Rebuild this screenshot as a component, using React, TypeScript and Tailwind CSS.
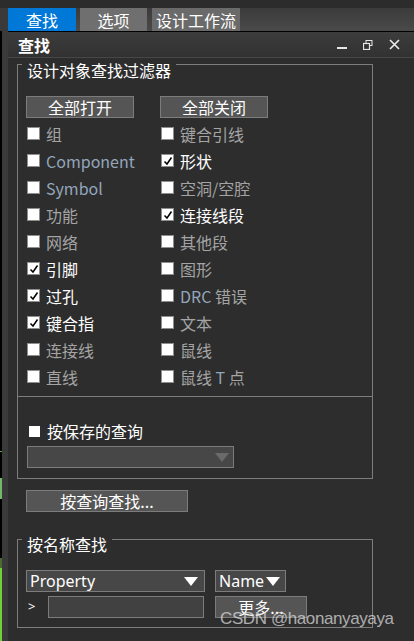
import type { ReactNode } from "react";

const cjk = "font-['Noto_Sans_CJK_SC','Noto_Sans',sans-serif]";

function Box({ checked }: { checked?: boolean }) {
  return (
    <span className="w-[13px] h-[13px] bg-white border border-[#8e8e8e] flex items-center justify-center shrink-0">
      {checked && (
        <svg width="10" height="10" viewBox="0 0 10 10">
          <path d="M1.5 5.5 L4 8 L8.5 1.5" stroke="#000" strokeWidth="1.5" fill="none" />
        </svg>
      )}
    </span>
  );
}

function En({ children }: { children: ReactNode }) {
  return <span className="text-[#93a6bb]">{children}</span>;
}

function Item({ label, checked }: { label: ReactNode; checked?: boolean }) {
  return (
    <div className="h-[27px] flex items-center gap-[6px] pl-px">
      <Box checked={checked} />
      <span className={checked ? "text-white" : "text-[#a4a4a4]"}>{label}</span>
    </div>
  );
}

function Btn({ children, className }: { children: ReactNode; className?: string }) {
  return (
    <div
      className={
        "h-[22px] bg-[#555555] border border-[#7c7c7c] text-white flex items-center justify-center leading-none " +
        (className ?? "")
      }
    >
      {children}
    </div>
  );
}

function Tri({ color }: { color: string }) {
  return (
    <svg width="14" height="9" viewBox="0 0 14 9">
      <path d="M0 0 H14 L7 9 Z" fill={color} />
    </svg>
  );
}

export default function App() {
  const left = [
    { l: "组" },
    { l: <En>Component</En> },
    { l: <En>Symbol</En> },
    { l: "功能" },
    { l: "网络" },
    { l: "引脚", c: true },
    { l: "过孔", c: true },
    { l: "键合指", c: true },
    { l: "连接线" },
    { l: "直线" },
  ];
  const right = [
    { l: "键合引线" },
    { l: "形状", c: true },
    { l: "空洞/空腔" },
    { l: "连接线段", c: true },
    { l: "其他段" },
    { l: "图形" },
    { l: <><En>DRC</En> 错误</> },
    { l: "文本" },
    { l: "鼠线" },
    { l: <>鼠线 <En>T</En> 点</> },
  ];

  return (
    <div className={"w-[414px] h-[641px] bg-[#2d2d2d] flex flex-col overflow-hidden relative text-[16px] " + cjk}>
      {/* top strip */}
      <div className="h-2 bg-[#2c2c2c] shrink-0" />
      {/* tabs */}
      <div className="h-[23px] flex shrink-0 bg-gradient-to-b from-[#3b3b3b] to-[#4a4a4a] text-white leading-none">
        <div className="w-2 bg-[#3a3a3a]" />
        <div className="w-[68px] bg-[#0078d7] flex items-center justify-center">查找</div>
        <div className="w-[67px] ml-1 bg-[#6f6f6f] flex items-center justify-center">选项</div>
        <div className="w-[88px] ml-[5px] bg-[#6a6a6a] flex items-center justify-center">设计工作流</div>
      </div>

      <div className="flex flex-1 min-h-0">
        {/* left strip */}
        <div className="w-2 flex shrink-0">
          <div className="w-[2px] flex flex-col">
            <div className="h-[420px] bg-black" />
            <div className="h-px bg-[#6aa84f]" />
            <div className="h-[26px] bg-black" />
            <div className="h-[21px] bg-[#74b86a]" />
            <div className="h-[59px] bg-black" />
            <div className="h-[10px] bg-[#4e6a34]" />
            <div className="flex-1 bg-[#6fd03a]" />
          </div>
          <div className="flex-1 bg-[#3a3a3a]" />
        </div>

        {/* panel */}
        <div className="flex-1 flex flex-col">
          <div className="h-[27px] shrink-0 border-t border-black border-b border-b-[#474747] bg-gradient-to-b from-[#3d3d3d] to-[#313131] flex items-center pl-[10px] pr-[14px]">
            <span className="text-white font-bold text-[16px] leading-none">查找</span>
            <div className="ml-auto flex items-center gap-[16px]">
              <svg width="10" height="10" viewBox="0 0 10 10">
                <rect x="0" y="7" width="10" height="2" fill="#e6e6e6" />
              </svg>
              <svg width="10" height="10" viewBox="0 0 10 10">
                <rect x="3" y="0.5" width="6" height="5" fill="none" stroke="#e6e6e6" strokeWidth="1" />
                <rect x="0.5" y="3.5" width="6" height="6" fill="#333" stroke="#e6e6e6" strokeWidth="1.2" />
              </svg>
              <svg width="11" height="11" viewBox="0 0 11 11">
                <path d="M1 1 L10 10 M10 1 L1 10" stroke="#ededed" strokeWidth="1.6" />
              </svg>
            </div>
          </div>

          {/* filter group */}
          <div className="relative ml-[9px] mt-[6px] w-[356px] border border-[#7d7d7d]">
            <span className="absolute left-[4px] top-[-3px] px-[5px] bg-[#2d2d2d] text-white leading-[16px]">
              设计对象查找过滤器
            </span>
            <div className="pt-[31px] pl-[8px] pb-[6px] border-b border-[#7d7d7d]">
              <div className="grid grid-cols-[134px_1fr]">
                <Btn className="w-[108px]">全部打开</Btn>
                <Btn className="w-[108px]">全部关闭</Btn>
              </div>
              <div className="grid grid-cols-[134px_1fr] mt-[2px]">
                <div className="flex flex-col">
                  {left.map((it, i) => (
                    <Item key={i} label={it.l} checked={it.c} />
                  ))}
                </div>
                <div className="flex flex-col">
                  {right.map((it, i) => (
                    <Item key={i} label={it.l} checked={it.c} />
                  ))}
                </div>
              </div>
            </div>
            <div className="pt-[23px] pb-[10px] pl-[9px]">
              <div className="h-[22px] flex items-center gap-[7px] pl-[2px]">
                <span className="w-[11px] h-[11px] bg-white shrink-0" />
                <span className="text-white">按保存的查询</span>
              </div>
              <div className="mt-[4px] w-[207px] h-[22px] bg-[#474747] border border-[#7c7c7c] flex items-center justify-end pr-[4px]">
                <Tri color="#6a6a6a" />
              </div>
            </div>
          </div>

          <Btn className="w-[162px] ml-[18px] mt-[11px]">按查询查找...</Btn>

          {/* name group */}
          <div className="relative ml-[9px] mt-[27px] w-[356px] border border-[#7d7d7d] pt-[30px] pb-[9px] pl-[8px]">
            <span className="absolute left-[4px] top-[-4px] px-[5px] bg-[#2d2d2d] text-white leading-[16px]">
              按名称查找
            </span>
            <div className="flex gap-[10px]">
              <div className="w-[179px] h-[22px] bg-[#474747] border border-[#7c7c7c] flex items-center justify-between pl-[3px] pr-[6px] text-white leading-none">
                <span className="font-['Noto_Sans',sans-serif]">Property</span>
                <Tri color="#ffffff" />
              </div>
              <div className="w-[71px] h-[22px] bg-[#474747] border border-[#7c7c7c] flex items-center justify-between pl-[3px] pr-[5px] text-white leading-none">
                <span className="font-['Noto_Sans',sans-serif]">Name</span>
                <Tri color="#ffffff" />
              </div>
            </div>
            <div className="flex items-center mt-[4px]">
              <span className="w-[22px] pl-[2px] text-white text-[13px] font-['Noto_Sans',sans-serif]">&gt;</span>
              <div className="w-[156px] h-[22px] bg-[#414141] border border-[#7c7c7c]" />
              <Btn className="w-[92px] ml-[11px]">更多...</Btn>
            </div>
          </div>
        </div>
      </div>

      {/* watermark over the panel */}
      <span className="absolute left-[220px] top-[609px] text-[17px] leading-[20px] tracking-[-0.4px] text-[rgba(225,225,225,0.72)] font-['Liberation_Sans',sans-serif]">
        CSDN @haonanyayaya
      </span>
    </div>
  );
}
